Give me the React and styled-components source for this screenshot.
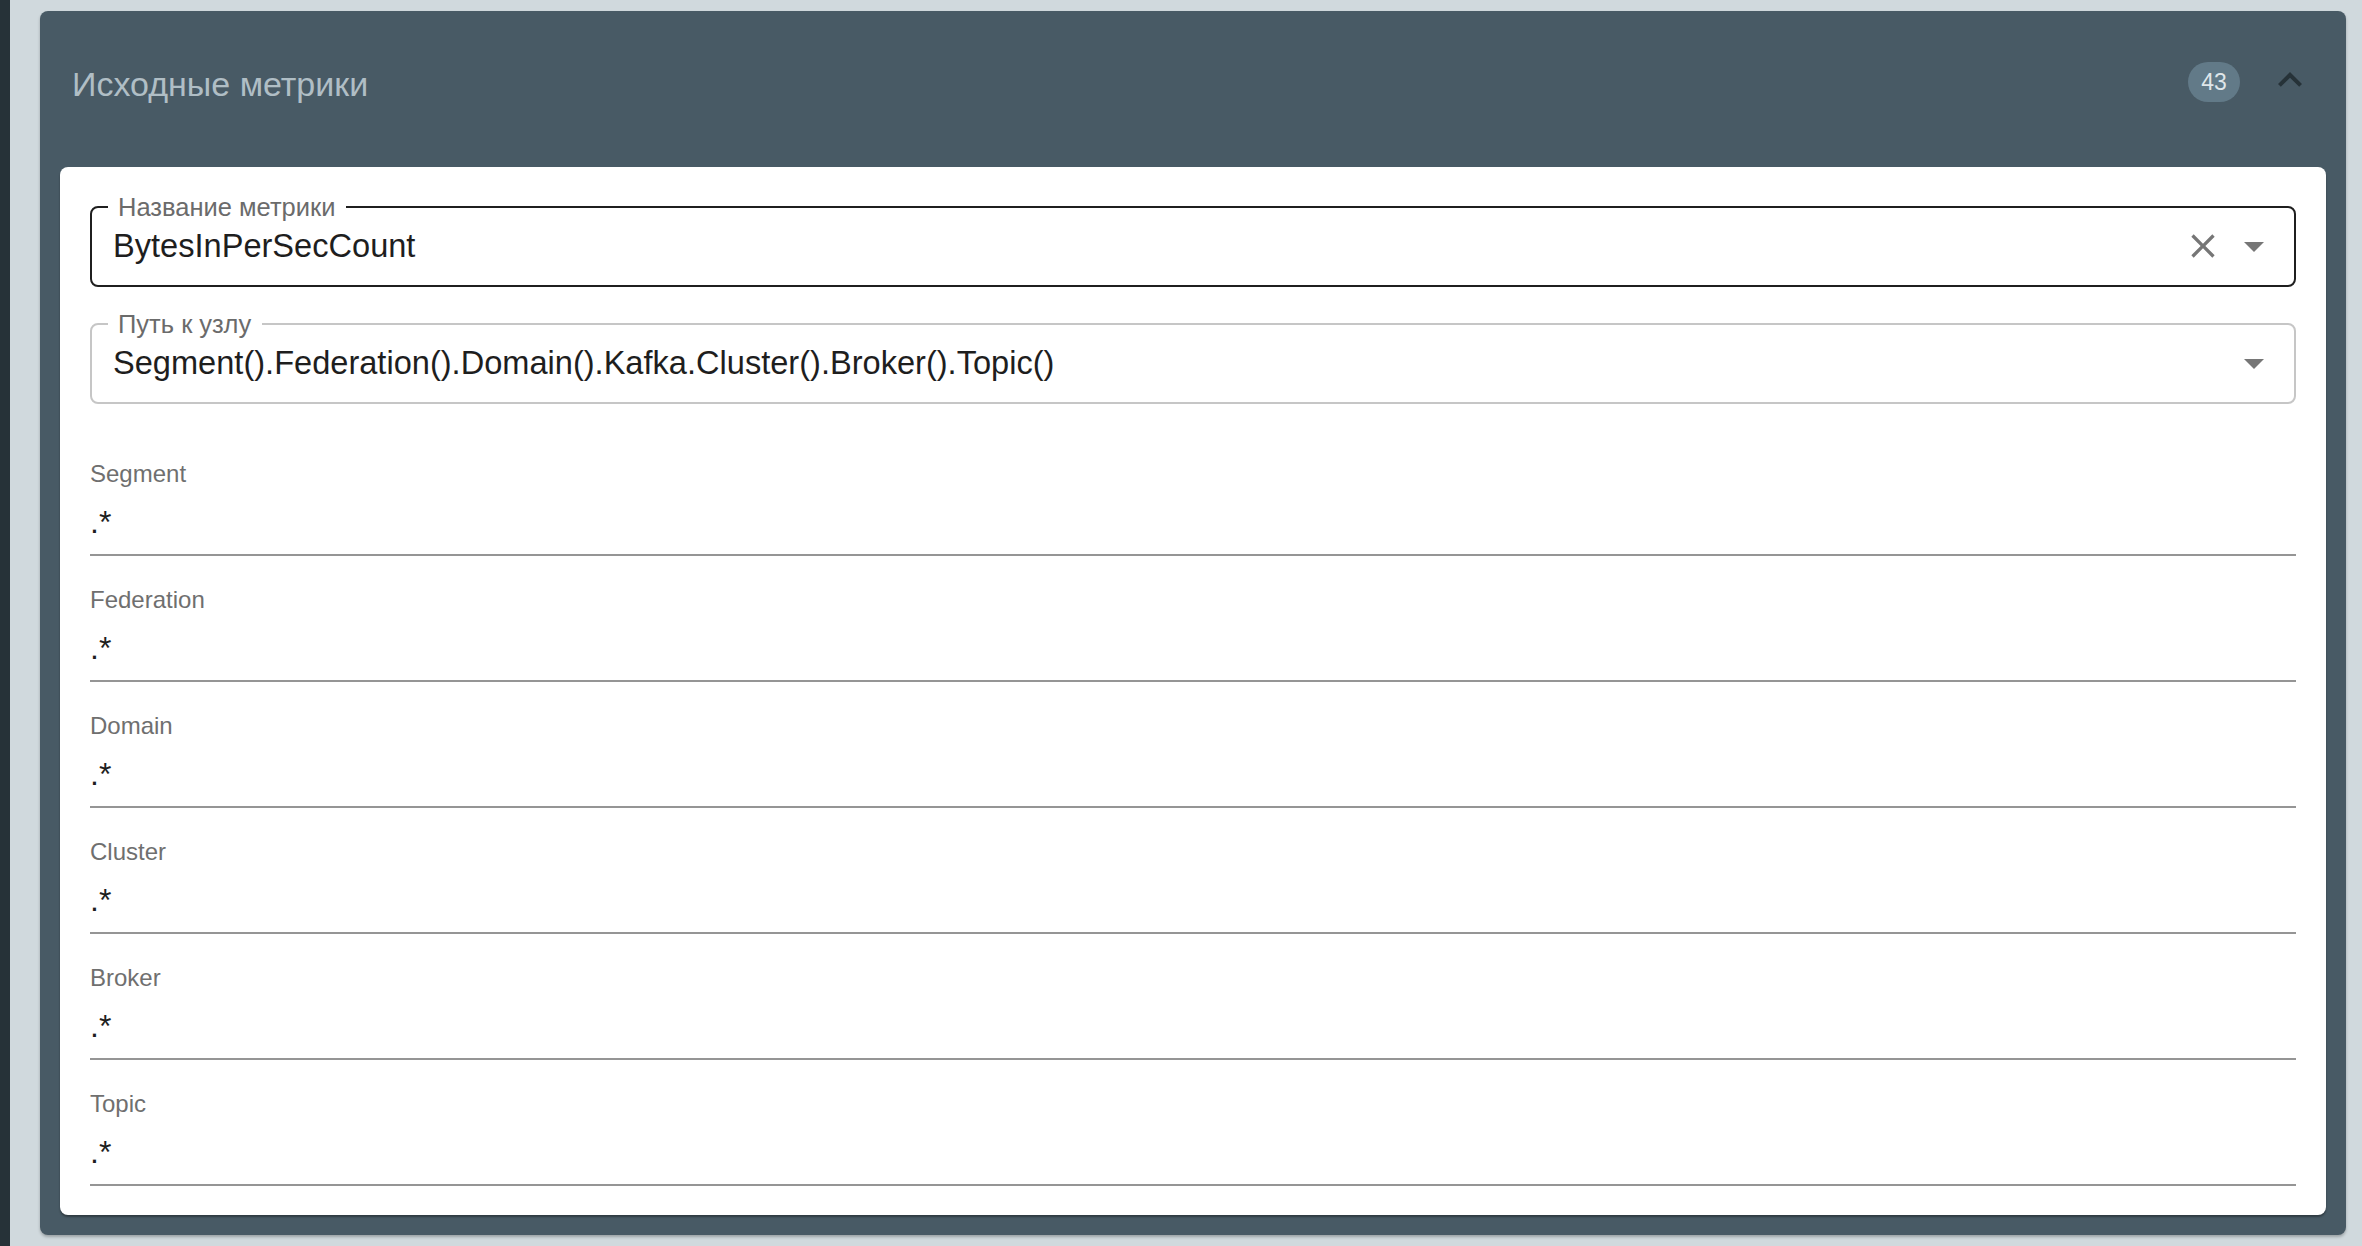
import React from 'react';
import styled, { createGlobalStyle } from 'styled-components';

const GlobalStyle = createGlobalStyle`
  html, body {
    margin: 0;
    padding: 0;
    background: #d0d9dd;
    font-family: "Liberation Sans", Arial, sans-serif;
  }
`;

const Page = styled.div`
  display: flex;
  min-height: 1246px;
  background: #d0d9dd;
`;

const Strip = styled.div`
  width: 10px;
  flex-shrink: 0;
  background: #263238;
`;

const Main = styled.div`
  flex: 1;
  padding: 11px 16px 11px 30px;
`;

const Section = styled.div`
  background: #485a65;
  border-radius: 8px;
  box-shadow: 0 2px 3px rgba(0, 0, 0, 0.25);
  padding: 0 20px 20px;
`;

const Header = styled.div`
  height: 156px;
  box-sizing: border-box;
  padding: 0 12px 14px 12px;
  display: flex;
  align-items: center;
`;

const Title = styled.div`
  flex: 1;
  margin-top: 4px;
  font-size: 34px;
  line-height: 38px;
  color: #b0bec5;
`;

const Badge = styled.div`
  width: 52px;
  height: 40px;
  border-radius: 20px;
  background: #627a88;
  color: #dfe6ea;
  font-size: 23px;
  display: flex;
  align-items: center;
  justify-content: center;
  margin-right: 26px;
`;

const Chevron = styled.svg`
  width: 48px;
  height: 48px;
  margin-top: -4px;
  fill: #263238;
`;

const Card = styled.div`
  background: #fff;
  border-radius: 8px;
  box-shadow: 0 2px 2px rgba(0, 0, 0, 0.35);
  padding: 28px 30px 29px;
`;

const Outlined = styled.fieldset`
  margin: 0 0 ${p => p.$gap}px;
  padding: 0 16px 20px;
  border: 2px solid ${p => (p.$active ? '#1f1f1f' : '#c6c6c6')};
  border-radius: 8px;
  min-width: 0;
`;

const Legend = styled.legend`
  padding: 0 11px 0 10px;
  font-size: 25.5px;
  line-height: 24px;
  color: #6b6b6b;
`;

const SelectRow = styled.div`
  display: flex;
  align-items: center;
  height: 38px;
  margin-top: 8px;
  padding-left: 5px;
`;

const Value = styled.div`
  flex: 1;
  font-size: 32.6px;
  line-height: 38px;
  color: #1e1e1e;
  white-space: nowrap;
`;

const Icon = styled.svg`
  width: ${p => p.$size}px;
  height: ${p => p.$size}px;
  flex-shrink: 0;
  fill: #767676;
  margin-left: ${p => p.$ml || 0}px;
`;

const Fields = styled.div`
  display: flex;
  flex-direction: column;
  gap: 32px;
  margin-top: 58px;
`;

const StdField = styled.div`
  border-bottom: 2px solid #959595;
  padding-bottom: 13px;
`;

const StdLabel = styled.div`
  font-size: 24px;
  line-height: 24px;
  color: #6f6f6f;
  margin-bottom: 17px;
`;

const StdValue = styled.div`
  font-size: 32px;
  line-height: 38px;
  color: #1e1e1e;
`;

const CloseIcon = () => (
  <Icon $size={40} viewBox="0 0 24 24">
    <path d="M19 6.41 17.59 5 12 10.59 6.41 5 5 6.41 10.59 12 5 17.59 6.41 19 12 13.41 17.59 19 19 17.59 13.41 12z" />
  </Icon>
);

const DropIcon = ({ ml }) => (
  <Icon $size={48} $ml={ml} viewBox="0 0 24 24">
    <path d="M7 10l5 5 5-5z" />
  </Icon>
);

const levels = ['Segment', 'Federation', 'Domain', 'Cluster', 'Broker', 'Topic'];

export default function App() {
  return (
    <>
      <GlobalStyle />
      <Page>
        <Strip />
        <Main>
          <Section>
            <Header>
              <Title>Исходные метрики</Title>
              <Badge>43</Badge>
              <Chevron viewBox="0 0 24 24">
                <path d="M12 8l-6 6 1.41 1.41L12 10.83l4.59 4.58L18 14z" />
              </Chevron>
            </Header>
            <Card>
              <Outlined $active $gap={25}>
                <Legend>Название метрики</Legend>
                <SelectRow>
                  <Value>BytesInPerSecCount</Value>
                  <CloseIcon />
                  <DropIcon ml={7} />
                </SelectRow>
              </Outlined>
              <Outlined $gap={0}>
                <Legend>Путь к узлу</Legend>
                <SelectRow>
                  <Value>Segment().Federation().Domain().Kafka.Cluster().Broker().Topic()</Value>
                  <DropIcon />
                </SelectRow>
              </Outlined>
              <Fields>
                {levels.map(name => (
                  <StdField key={name}>
                    <StdLabel>{name}</StdLabel>
                    <StdValue>.*</StdValue>
                  </StdField>
                ))}
              </Fields>
            </Card>
          </Section>
        </Main>
      </Page>
    </>
  );
}
